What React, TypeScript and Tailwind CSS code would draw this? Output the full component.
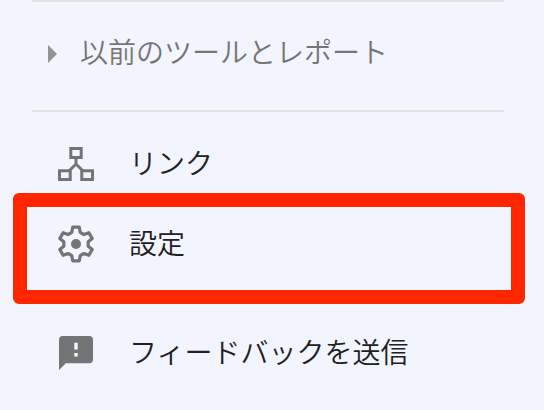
import type { ReactNode } from "react";

function LinkIcon() {
    return (
        <svg viewBox="0 0 36 36" className="h-9 w-9" fill="none" stroke="currentColor" strokeWidth="3" aria-hidden="true">
            <rect x="12.8" y="2.5" width="10.4" height="9" />
            <rect x="1.5" y="24.8" width="10.7" height="8.7" />
            <rect x="23.8" y="24.8" width="10.7" height="8.7" />
            <path d="M18 12v6.5M10.5 25.5l7.5-7.5 7.5 7.5" />
        </svg>
    );
}

function GearIcon() {
    return (
        <svg viewBox="-18 -18 36 36" className="h-9 w-9 overflow-visible" aria-hidden="true">
            <path
                d="M-4.2-11.7L-3.3-16.8H3.3L4.2-11.7L8-9.5L12.9-11.3L16.2-5.5L12.2-2.2V2.2L16.2 5.5L12.9 11.3L8 9.5L4.2 11.7L3.3 16.8H-3.3L-4.2 11.7L-8 9.5L-12.9 11.3L-16.2 5.5L-12.2 2.2V-2.2L-16.2-5.5L-12.9-11.3L-8-9.5Z"
                fill="none"
                stroke="currentColor"
                strokeWidth="3.2"
                strokeLinejoin="round"
            />
            <circle r="5" fill="currentColor" />
        </svg>
    );
}

function FeedbackIcon() {
    return (
        <svg viewBox="2 2 20 20" className="h-[34px] w-[34px]" fill="currentColor" aria-hidden="true">
            <path d="M20 2H4c-1.1 0-1.99.9-1.99 2L2 22l4-4h14c1.1 0 2-.9 2-2V4c0-1.1-.9-2-2-2zm-7 12h-2v-2h2v2zm0-4h-2V6h2v4z" />
        </svg>
    );
}

interface NavItemProps {
    href: string;
    icon: ReactNode;
    label: string;
    highlighted?: boolean;
}

function NavItem({ href, icon, label, highlighted }: NavItemProps) {
    return (
        <li className="relative">
            <a href={href} className="flex h-20 items-center gap-[35px] pl-[58px] text-[28px] leading-10 text-[#212121]">
                <span className="flex w-9 shrink-0 justify-center pt-1 text-[#737476]">{icon}</span>
                <span>{label}</span>
            </a>
            {highlighted && (
                <div className="pointer-events-none absolute -top-[9px] -bottom-[22px] right-[19px] left-[13px] rounded-md border-[14px] border-[#ff2600]" />
            )}
        </li>
    );
}

export default function App() {
    return (
        <nav className="min-h-screen bg-[#f2f5fd] font-['Noto_Sans_CJK_JP',sans-serif] font-[350]">
            <div className="mr-10 ml-8 border-y-2 border-[#e2e2e2]">
                <button type="button" aria-expanded="false" className="flex h-[108px] w-full items-center gap-[23px] pb-[10px] pl-4 text-left text-[28px] leading-10 text-[#757575]">
                    <svg viewBox="0 0 9 18" className="mt-[6px] h-[18px] w-[9px] shrink-0" fill="#929497" aria-hidden="true">
                        <path d="M0 0l9 9-9 9z" />
                    </svg>
                    <span>以前のツールとレポート</span>
                </button>
            </div>

            <ul className="pt-[10px]">
                <NavItem href="#links" icon={<LinkIcon />} label="リンク" />
                <NavItem href="#settings" icon={<GearIcon />} label="設定" highlighted />
            </ul>
            <ul className="pt-[29px]">
                <NavItem href="#feedback" icon={<FeedbackIcon />} label="フィードバックを送信" />
            </ul>
        </nav>
    );
}
